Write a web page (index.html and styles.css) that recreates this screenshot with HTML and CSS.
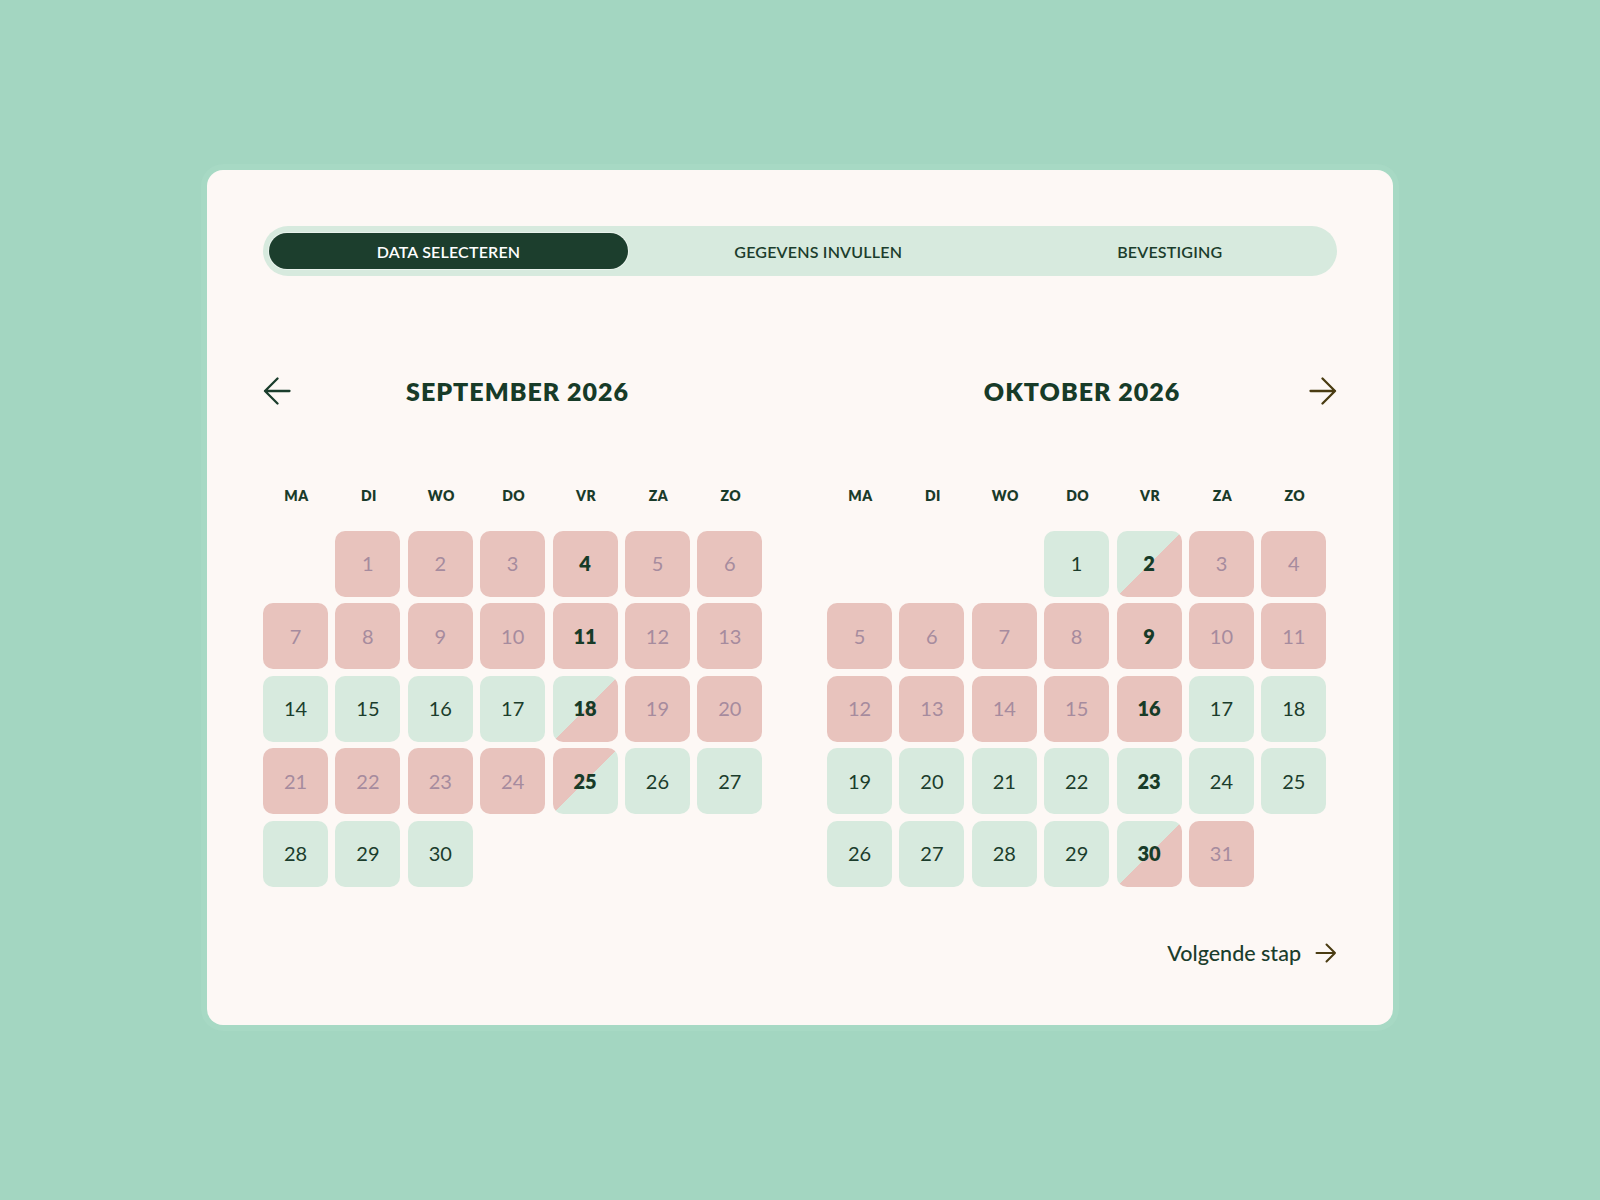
FILE: index.html
```html
<!DOCTYPE html>
<html lang="nl">
<head>
<meta charset="utf-8">
<title>Data selecteren</title>
<link rel="stylesheet" href="styles.css">
</head>
<body>
<main class="card">
  <nav class="steps">
    <div class="step active">DATA SELECTEREN</div>
    <div class="step">GEGEVENS INVULLEN</div>
    <div class="step">BEVESTIGING</div>
  </nav>

  <section class="months">
    <div class="month month-left">
      <div class="month-head">
        <button class="nav-btn prev" aria-label="Vorige maand">
          <svg width="28" height="28" viewBox="0 0 28 28"><path d="M26.5 14H2 M14.5 1.5L2 14L14.5 26.5" fill="none" stroke="#1b3d2c" stroke-width="2.3" stroke-linecap="round" stroke-linejoin="round"/></svg>
        </button>
        <h2 class="month-title">SEPTEMBER 2026</h2>
        <span class="nav-spacer"></span>
      </div>
      <div class="weekdays">
        <span>MA</span><span>DI</span><span>WO</span><span>DO</span><span>VR</span><span>ZA</span><span>ZO</span>
      </div>
      <div class="days">
        <span class="day empty"></span>
        <span class="day busy">1</span>
        <span class="day busy">2</span>
        <span class="day busy">3</span>
        <span class="day busy strong">4</span>
        <span class="day busy">5</span>
        <span class="day busy">6</span>
        <span class="day busy">7</span>
        <span class="day busy">8</span>
        <span class="day busy">9</span>
        <span class="day busy">10</span>
        <span class="day busy strong">11</span>
        <span class="day busy">12</span>
        <span class="day busy">13</span>
        <span class="day free">14</span>
        <span class="day free">15</span>
        <span class="day free">16</span>
        <span class="day free">17</span>
        <span class="day split-fb strong">18</span>
        <span class="day busy">19</span>
        <span class="day busy">20</span>
        <span class="day busy">21</span>
        <span class="day busy">22</span>
        <span class="day busy">23</span>
        <span class="day busy">24</span>
        <span class="day split-bf strong">25</span>
        <span class="day free">26</span>
        <span class="day free">27</span>
        <span class="day free">28</span>
        <span class="day free">29</span>
        <span class="day free">30</span>
      </div>
    </div>

    <div class="month month-right">
      <div class="month-head">
        <span class="nav-spacer"></span>
        <h2 class="month-title">OKTOBER 2026</h2>
        <button class="nav-btn next" aria-label="Volgende maand">
          <svg width="28" height="28" viewBox="0 0 28 28"><path d="M1.5 14H26 M13.5 1.5L26 14L13.5 26.5" fill="none" stroke="#4a3c12" stroke-width="2.3" stroke-linecap="round" stroke-linejoin="round"/></svg>
        </button>
      </div>
      <div class="weekdays">
        <span>MA</span><span>DI</span><span>WO</span><span>DO</span><span>VR</span><span>ZA</span><span>ZO</span>
      </div>
      <div class="days">
        <span class="day empty"></span>
        <span class="day empty"></span>
        <span class="day empty"></span>
        <span class="day free">1</span>
        <span class="day split-fb strong">2</span>
        <span class="day busy">3</span>
        <span class="day busy">4</span>
        <span class="day busy">5</span>
        <span class="day busy">6</span>
        <span class="day busy">7</span>
        <span class="day busy">8</span>
        <span class="day busy strong">9</span>
        <span class="day busy">10</span>
        <span class="day busy">11</span>
        <span class="day busy">12</span>
        <span class="day busy">13</span>
        <span class="day busy">14</span>
        <span class="day busy">15</span>
        <span class="day busy strong">16</span>
        <span class="day free">17</span>
        <span class="day free">18</span>
        <span class="day free">19</span>
        <span class="day free">20</span>
        <span class="day free">21</span>
        <span class="day free">22</span>
        <span class="day free strong">23</span>
        <span class="day free">24</span>
        <span class="day free">25</span>
        <span class="day free">26</span>
        <span class="day free">27</span>
        <span class="day free">28</span>
        <span class="day free">29</span>
        <span class="day split-fb strong">30</span>
        <span class="day busy">31</span>
      </div>
    </div>
  </section>

  <footer class="footer">
    <a class="next-step" href="#">Volgende stap
      <svg width="22" height="20" viewBox="0 0 22 20"><path d="M1.5 10H20 M11.5 1.5L20 10L11.5 18.5" fill="none" stroke="#4a3c12" stroke-width="2" stroke-linecap="round" stroke-linejoin="round"/></svg>
    </a>
  </footer>
</main>
</body>
</html>
```

FILE: styles.css
```css
* { box-sizing: border-box; }

html, body {
  margin: 0;
  padding: 0;
}

body {
  background: #a3d6c1;
  font-family: "Lato", "Noto Sans", sans-serif;
  color: #1b3d2c;
  min-height: 1200px;
  padding-top: 170px;
}

.card {
  width: 1186px;
  margin: 0 auto;
  background: #fdf8f5;
  border-radius: 16px;
  padding: 56px 56px 57px 56px;
  box-shadow: 0 0 0 6px rgba(170, 218, 198, 0.6);
}

/* Steps bar */
.steps {
  display: grid;
  grid-template-columns: 359px 1fr 1fr;
  height: 50px;
  padding: 7px 6px;
  background: #d7eade;
  border-radius: 25px;
}

.step {
  display: flex;
  align-items: center;
  justify-content: center;
  font-size: 16px;
  font-weight: 600;
  letter-spacing: 0.2px;
  color: #1b3d2c;
  padding-left: 29px;
}

.step.active {
  background: #1c3e2d;
  color: #ffffff;
  border-radius: 18px;
  padding-left: 0;
  box-shadow: 0 0 0 1px rgba(255, 255, 255, 0.45);
}

/* Months */
.months {
  display: flex;
  gap: 64px;
  margin-top: 95px;
}

.month-left { width: 500px; }
.month-right { width: 510px; }

.month-head {
  display: grid;
  grid-template-columns: 28px 1fr 28px;
  align-items: center;
  height: 40px;
}

.month-left .month-title { padding-left: 9px; }

.month-title {
  margin: 0;
  text-align: center;
  font-size: 25px;
  font-weight: 800;
  letter-spacing: 1px;
  color: #173b28;
}

.nav-btn {
  border: 0;
  background: none;
  padding: 0;
  width: 28px;
  height: 28px;
  display: flex;
  cursor: pointer;
}

.weekdays {
  display: grid;
  grid-template-columns: repeat(7, 65px);
  column-gap: 7.4px;
  margin-top: 74px;
  height: 20px;
  align-items: center;
}

.weekdays span {
  text-align: center;
  font-size: 14px;
  font-weight: 800;
  letter-spacing: 0.5px;
  color: #1a3b2a;
  padding-left: 2px;
}

.days {
  display: grid;
  grid-template-columns: repeat(7, 65px);
  grid-auto-rows: 66px;
  column-gap: 7.4px;
  row-gap: 6.5px;
  margin-top: 25.5px;
}

.day {
  display: flex;
  align-items: center;
  justify-content: center;
  border-radius: 10px;
  font-size: 20px;
  font-weight: 400;
  padding-bottom: 1px;
}

.day.empty { background: transparent; }

.day.free {
  background: #d7eade;
  color: #1b3d2c;
}

.day.busy {
  background: #e8c3bd;
  color: #a68b9e;
}

.day.split-fb {
  background: linear-gradient(to bottom right, #d7eade 50%, #e8c3bd 50%);
}

.day.split-bf {
  background: linear-gradient(to bottom right, #e8c3bd 50%, #d7eade 50%);
}

.day.strong {
  font-weight: 800;
  color: #173b28;
}

/* Footer */
.footer {
  display: flex;
  justify-content: flex-end;
  align-items: center;
  height: 30px;
  margin-top: 51px;
}

.next-step {
  display: flex;
  align-items: center;
  gap: 14px;
  font-size: 21.5px;
  font-weight: 500;
  color: #1b3d2c;
  text-decoration: none;
}
```
